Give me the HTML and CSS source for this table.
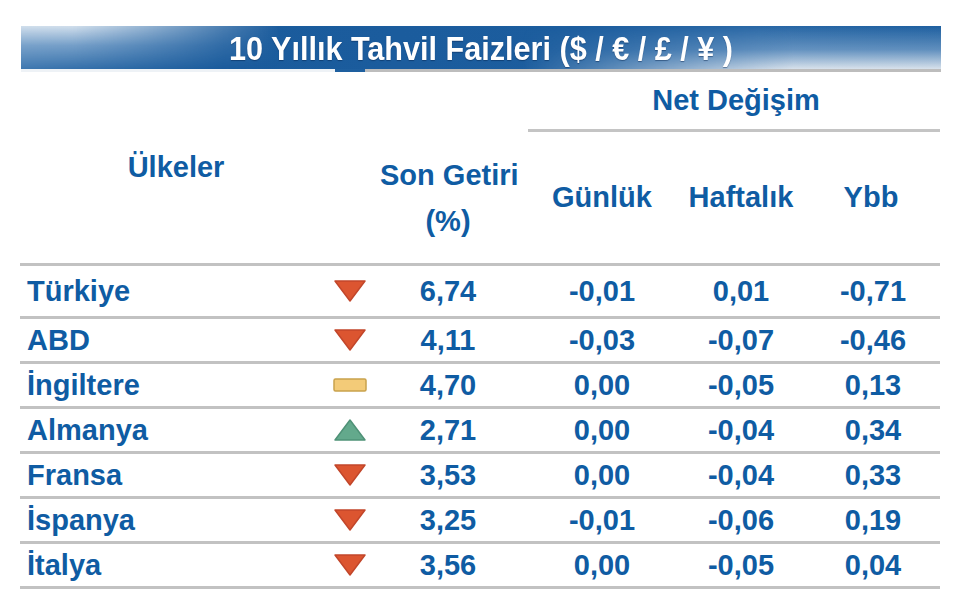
FILE: index.html
```html
<!DOCTYPE html>
<html lang="tr">
<head>
<meta charset="utf-8">
<title>10 Yıllık Tahvil Faizleri</title>
<link rel="stylesheet" href="styles.css">
</head>
<body>
<div class="page">
  <div class="title"><span class="title-text">10 Yıllık Tahvil Faizleri ($ / € / £ / ¥ )</span></div>
  <div class="title-rule"></div>

  <div class="thead">
    <div class="h-country">Ülkeler</div>
    <div class="h-yield">Son Getiri<br>(%)</div>
    <div class="h-net">Net Değişim</div>
    <div class="h-net-rule"></div>
    <div class="h-col h-d">Günlük</div>
    <div class="h-col h-w">Haftalık</div>
    <div class="h-col h-y">Ybb</div>
  </div>

  <div class="row row-first">
    <div class="country">Türkiye</div>
    <div class="icon"><svg class="tri" viewBox="0 0 34 24"><polygon points="2,2 32,2 17,22" class="down"/></svg></div>
    <div class="num">6,74</div>
    <div class="num">-0,01</div>
    <div class="num">0,01</div>
    <div class="num last">-0,71</div>
  </div>
  <div class="row">
    <div class="country">ABD</div>
    <div class="icon"><svg class="tri" viewBox="0 0 34 24"><polygon points="2,2 32,2 17,22" class="down"/></svg></div>
    <div class="num">4,11</div>
    <div class="num">-0,03</div>
    <div class="num">-0,07</div>
    <div class="num last">-0,46</div>
  </div>
  <div class="row">
    <div class="country">İngiltere</div>
    <div class="icon"><svg class="bar" viewBox="0 0 34 14"><rect x="1" y="1" width="32" height="12" rx="1.5" class="flat"/></svg></div>
    <div class="num">4,70</div>
    <div class="num">0,00</div>
    <div class="num">-0,05</div>
    <div class="num last">0,13</div>
  </div>
  <div class="row">
    <div class="country">Almanya</div>
    <div class="icon"><svg class="tri" viewBox="0 0 34 24"><polygon points="17,2 32,22 2,22" class="up"/></svg></div>
    <div class="num">2,71</div>
    <div class="num">0,00</div>
    <div class="num">-0,04</div>
    <div class="num last">0,34</div>
  </div>
  <div class="row">
    <div class="country">Fransa</div>
    <div class="icon"><svg class="tri" viewBox="0 0 34 24"><polygon points="2,2 32,2 17,22" class="down"/></svg></div>
    <div class="num">3,53</div>
    <div class="num">0,00</div>
    <div class="num">-0,04</div>
    <div class="num last">0,33</div>
  </div>
  <div class="row">
    <div class="country">İspanya</div>
    <div class="icon"><svg class="tri" viewBox="0 0 34 24"><polygon points="2,2 32,2 17,22" class="down"/></svg></div>
    <div class="num">3,25</div>
    <div class="num">-0,01</div>
    <div class="num">-0,06</div>
    <div class="num last">0,19</div>
  </div>
  <div class="row">
    <div class="country">İtalya</div>
    <div class="icon"><svg class="tri" viewBox="0 0 34 24"><polygon points="2,2 32,2 17,22" class="down"/></svg></div>
    <div class="num">3,56</div>
    <div class="num">0,00</div>
    <div class="num">-0,05</div>
    <div class="num last">0,04</div>
  </div>
</div>
</body>
</html>
```

FILE: styles.css
```css
html, body {
  margin: 0;
  padding: 0;
  background: #ffffff;
}

body {
  font-family: "Liberation Sans", Arial, sans-serif;
  font-weight: bold;
  color: #0f5ca3;
}

.page {
  width: 921px;
  margin-left: 20px;
  padding-top: 26px;
}

/* Title bar */
.title {
  position: relative;
  height: 43px;
  margin-left: 1px;
  width: 920px;
  background: linear-gradient(to right, #3f78b0 0%, #1a5b9c 22%, #1c5d9e 60%, #2a68a6 80%, #1f60a0 100%);
  display: flex;
  align-items: center;
  justify-content: center;
  overflow: hidden;
}

.title::before,
.title::after {
  content: "";
  position: absolute;
  top: 0;
  bottom: 0;
}

.title::before {
  left: 0;
  width: 260px;
  background: linear-gradient(to bottom, rgba(214, 226, 238, 0.97) 0%, rgba(160, 190, 220, 0.6) 45%, rgba(30, 92, 154, 0) 100%);
  -webkit-mask-image: linear-gradient(to right, #000 0%, #000 20%, transparent 100%);
  mask-image: linear-gradient(to right, #000 0%, #000 20%, transparent 100%);
}

.title::after {
  right: 0;
  width: 420px;
  background: linear-gradient(to bottom, rgba(30, 92, 154, 0) 0%, rgba(150, 182, 214, 0.55) 55%, rgba(222, 230, 238, 0.97) 100%);
  -webkit-mask-image: linear-gradient(to left, #000 0%, #000 35%, transparent 100%);
  mask-image: linear-gradient(to left, #000 0%, #000 35%, transparent 100%);
}

.title-text {
  position: relative;
  z-index: 1;
  display: inline-block;
  color: #ffffff;
  font-size: 34px;
  line-height: 1;
  transform: scaleX(0.9);
  text-shadow: 0 1px 1px rgba(0, 30, 70, 0.45);
  white-space: nowrap;
}

.title-rule {
  height: 3px;
  margin-left: 1px;
  width: 920px;
  background: linear-gradient(to right, #eef2f6 0, #eef2f6 314px, #1e5f9f 314px, #1e5f9f 344px, #bdbdbd 344px, #bdbdbd 100%);
}

/* Shared grid */
.thead,
.row {
  display: grid;
  grid-template-columns: 300px 60px 136px 172px 106px 146px;
  width: 920px;
}

/* Header */
.thead {
  grid-template-rows: 57px 3px 131px;
  border-bottom: 3px solid #c2c2c2;
  font-size: 29px;
}

.h-country {
  grid-column: 1;
  grid-row: 1 / 4;
  align-self: center;
  text-align: center;
  padding-left: 12px;
  line-height: 1;
}

.h-yield {
  grid-column: 3;
  grid-row: 3;
  align-self: center;
  text-align: center;
  line-height: 46px;
  white-space: nowrap;
}

.h-net {
  grid-column: 4 / 7;
  grid-row: 1;
  align-self: center;
  text-align: center;
  padding-left: 16px;
  line-height: 1;
}

.h-net-rule {
  grid-column: 4 / 7;
  grid-row: 2;
  margin-left: 12px;
  background: #c4c4c4;
}

.h-col {
  grid-row: 3;
  align-self: center;
  text-align: center;
  line-height: 1;
}

.h-d { grid-column: 4; }
.h-w { grid-column: 5; }
.h-y { grid-column: 6; padding-left: 8px; }

/* Data rows */
.row {
  height: 42px;
  align-items: center;
  border-bottom: 3px solid #c2c2c2;
  font-size: 29px;
  line-height: 1;
}

.row-first {
  height: 50px;
}

.country {
  padding-left: 7px;
}

.icon {
  display: flex;
  justify-content: center;
  align-items: center;
}

.tri {
  width: 34px;
  height: 24px;
  display: block;
}

.bar {
  width: 34px;
  height: 14px;
  display: block;
}

.down {
  fill: #dc5530;
  stroke: #c2462a;
  stroke-width: 1.5;
  stroke-linejoin: round;
}

.up {
  fill: #63a98c;
  stroke: #4f9277;
  stroke-width: 1.5;
  stroke-linejoin: round;
}

.flat {
  fill: #f3cb78;
  stroke: #c9a24c;
  stroke-width: 1.5;
}

.num {
  text-align: center;
}

.num.last {
  padding-left: 12px;
}
```
